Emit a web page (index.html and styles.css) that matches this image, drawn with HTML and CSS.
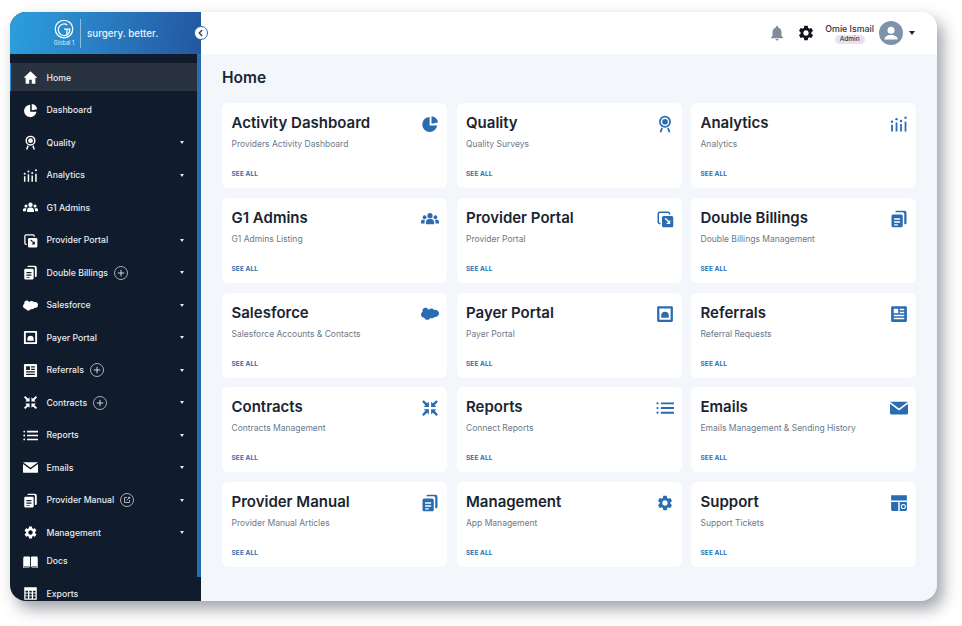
FILE: index.html
```html
<!DOCTYPE html>
<html>
<head>
    <title>Global 1 - Home</title>
    <link rel="stylesheet" href="styles.css">
</head>
<body>
    <svg class="icon-defs" xmlns="http://www.w3.org/2000/svg">
        <symbol id="i-home" viewBox="0 0 24 24"><path d="M12 2 1 12.500h3.200V22H10v-6.500h4V22h5.800v-9.500H23z"/></symbol>
        <symbol id="i-pie" viewBox="0 0 24 24"><path d="M11.500 2.600A10 10 0 1 0 21.600 14H11.500z"/><path d="M14 1.500c4.700.4 8.300 3.900 8.500 8.500L14 11.500z"/></symbol>
        <symbol id="i-award" viewBox="0 0 24 24"><path fill-rule="evenodd" d="M12 1a8 8 0 1 0 0 16 8 8 0 0 0 0-16zm0 2.300a5.700 5.700 0 1 1 0 11.400 5.700 5.700 0 0 1 0-11.400z"/><circle cx="12" cy="9" r="3.800"/><path d="M7 16.500 4.800 23h2.500l1.800-5zM17 16.500l2.200 6.500h-2.500l-1.800-5z"/></symbol>
        <symbol id="i-chart" viewBox="0 0 24 24"><path d="M1.500 13h2.400v9H1.500zM7.500 10h2.400v12H7.500zM13.500 12h2.400v10h-2.400zM19.500 9h2.400v13h-2.400z"/><circle cx="2.700" cy="9" r="1.600"/><circle cx="8.700" cy="5.500" r="1.600"/><circle cx="14.700" cy="8" r="1.600"/><circle cx="20.700" cy="3.500" r="1.600"/></symbol>
        <symbol id="i-users" viewBox="0 0 24 24"><circle cx="12" cy="7.500" r="3.500"/><circle cx="4.800" cy="9.500" r="2.500"/><circle cx="19.200" cy="9.500" r="2.500"/><path d="M6.500 19v-2.500c0-2.500 2-4.500 4-4.500h3c2 0 4 2 4 4.500V19z"/><path d="M0 18v-2.500C0 13.500 1.500 13 3 13h2.500a6 6 0 0 0-.8 3v2zM24 18v-2.500c0-2-1.500-2.500-3-2.500h-2.500a6 6 0 0 1 .8 3v2z"/></symbol>
        <symbol id="i-portal" viewBox="0 0 24 24"><path d="M5 2h11a3 3 0 0 1 3 3v1h-2V5a1 1 0 0 0-1-1H5a1 1 0 0 0-1 1v11a1 1 0 0 0 1 1h1v2H5a3 3 0 0 1-3-3V5a3 3 0 0 1 3-3z"/><path fill-rule="evenodd" d="M10 8h11a2 2 0 0 1 2 2v11a2 2 0 0 1-2 2H10a2 2 0 0 1-2-2V10a2 2 0 0 1 2-2zm1.500 3.500 4.500 4.500-2.500 2.500H19V13l-1.700 1.700-4.500-4.500z"/></symbol>
        <symbol id="i-docs" viewBox="0 0 24 24"><path fill-rule="evenodd" d="M4 6h11a2 2 0 0 1 2 2v13a2 2 0 0 1-2 2H4a2 2 0 0 1-2-2V8a2 2 0 0 1 2-2zm1.500 5v2h8v-2zm0 4v2h8v-2zm0 4v1.500h5V19z"/><path d="M7 3a2 2 0 0 1 2-2h10a3 3 0 0 1 3 3v13a2 2 0 0 1-2 2h-1V5a2 2 0 0 0-2-2z"/></symbol>
        <symbol id="i-cloud" viewBox="0 0 24 24"><path d="M10 6.500c1-1.200 2.300-1.800 3.700-1.800 1.700 0 3.200.9 4 2.200.7-.3 1.400-.5 2.200-.4 2.400.2 4.100 2.300 4.100 4.600 0 2.700-2.200 4.900-4.900 4.900-.4 0-.8 0-1.100-.1-.8 1.200-2.100 1.900-3.600 1.900-.7 0-1.300-.1-1.900-.4-.8 1.500-2.300 2.400-4 2.400-1.900 0-3.500-1.100-4.200-2.800-2.400 0-4.300-1.800-4.300-4.200 0-1.600.9-3 2.200-3.700-.1-.5-.2-1-.2-1.400 0-2.200 1.800-3.900 4-3.900 1.600 0 3 .9 4 2.500z"/></symbol>
        <symbol id="i-payer" viewBox="0 0 24 24"><path fill-rule="evenodd" d="M3 1.500h18A1.500 1.500 0 0 1 22.500 3v18a1.500 1.500 0 0 1-1.500 1.500H3A1.500 1.500 0 0 1 1.500 21V3A1.500 1.500 0 0 1 3 1.500zM4.500 4.500v15h15v-15z"/><path d="M7 17v-3a5 5 0 0 1 10 0v3z"/></symbol>
        <symbol id="i-news" viewBox="0 0 24 24"><path fill-rule="evenodd" d="M3 1.500h18A1.500 1.500 0 0 1 22.500 3v18a1.500 1.500 0 0 1-1.500 1.500H3A1.500 1.500 0 0 1 1.500 21V3A1.500 1.500 0 0 1 3 1.500zM5 5v6h6V5zm8 0v2h6V5zm0 4v2h6V9zM5 13v2h14v-2zm0 4v2h14v-2z"/></symbol>
        <symbol id="i-contract" viewBox="0 0 24 24"><path d="M10.500 10.500v-7L8.200 5.800 3.500 1.500l-2 2 4.300 4.700-2.300 2.300zM13.500 10.500v-7l2.300 2.300 4.700-4.300 2 2-4.300 4.700 2.300 2.300zM10.500 13.500v7l-2.300-2.300-4.700 4.300-2-2 4.300-4.700-2.300-2.300zM13.500 13.500v7l2.300-2.300 4.700 4.300 2-2-4.300-4.700 2.300-2.300z"/></symbol>
        <symbol id="i-list" viewBox="0 0 24 24"><path d="M6.500 4.500H24V7H6.500zM6.500 10.700H24v2.500H6.500zM6.500 17H24v2.500H6.500z"/><circle cx="2" cy="5.700" r="1.500"/><circle cx="2" cy="12" r="1.500"/><circle cx="2" cy="18.200" r="1.500"/></symbol>
        <symbol id="i-mail" viewBox="0 0 24 24"><path d="M0 3.500h24L12 12.500z"/><path d="M0 6.200V19a1.500 1.500 0 0 0 1.500 1.500h21A1.500 1.500 0 0 0 24 19V6.200l-12 9z"/></symbol>
        <symbol id="i-gear" viewBox="0 0 24 24"><path d="M19.140 12.940c.04-.3.06-.61.06-.94 0-.32-.02-.64-.07-.94l2.030-1.580a.49.49 0 0 0 .12-.61l-1.920-3.320a.488.488 0 0 0-.59-.22l-2.390.96c-.5-.38-1.030-.7-1.620-.94l-.36-2.540a.484.484 0 0 0-.48-.41h-3.840c-.24 0-.43.17-.47.41l-.36 2.540c-.59.24-1.130.57-1.620.94l-2.390-.96c-.22-.08-.47 0-.59.22L2.740 8.870c-.12.21-.08.47.12.61l2.030 1.580c-.05.3-.09.63-.09.94s.02.64.07.94l-2.030 1.580a.49.49 0 0 0-.12.61l1.920 3.320c.12.22.37.29.59.22l2.390-.96c.5.38 1.030.7 1.620.94l.36 2.540c.05.24.24.41.48.41h3.840c.24 0 .44-.17.47-.41l.36-2.540c.59-.24 1.130-.56 1.620-.94l2.390.96c.22.08.47 0 .59-.22l1.920-3.320c.12-.22.07-.47-.12-.61l-2.010-1.580zM12 15.600c-1.980 0-3.600-1.620-3.600-3.600s1.620-3.600 3.600-3.600 3.600 1.620 3.600 3.600-1.620 3.600-3.600 3.600z"/></symbol>
        <symbol id="i-book" viewBox="0 0 24 24"><path d="M1 4h9a2 2 0 0 1 1.300.6V21a3 3 0 0 0-2-1H1zm22 0h-9a2 2 0 0 0-1.300.6V21a3 3 0 0 1 2-1h8.300z"/><path d="M0 6h1v15h9v1H0zM24 6h-1v15h-9v1h10z"/></symbol>
        <symbol id="i-table" viewBox="0 0 24 24"><path fill-rule="evenodd" d="M2 2h20v20H2zm2 5.500v3h4v-3zm6 0v3h4v-3zm6 0v3h4v-3zM4 12v3h4v-3zm6 0v3h4v-3zm6 0v3h4v-3zM4 16.500V20h4v-3.500zm6 0V20h4v-3.500zm6 0V20h4v-3.500z"/></symbol>
        <symbol id="i-support" viewBox="0 0 24 24"><path d="M1.500 1.500h21v7h-21zM1.500 10.500h9.500v12H3a1.500 1.500 0 0 1-1.500-1.500z"/><path fill-rule="evenodd" d="M13 10.500h9.500V21a1.500 1.500 0 0 1-1.500 1.500h-8zm4.800 2.800a3.400 3.400 0 1 0 0 6.800 3.400 3.400 0 0 0 0-6.800z"/><circle cx="17.800" cy="16.700" r="2"/></symbol>
        <symbol id="i-plus" viewBox="0 0 14 14"><circle cx="7" cy="7" r="6.500" fill="none" stroke="currentColor" stroke-width=".7"/><path d="M7 3.800v6.400M3.800 7h6.400" fill="none" stroke="currentColor" stroke-width=".9"/></symbol>
        <symbol id="i-ext" viewBox="0 0 14 14"><circle cx="7" cy="7" r="6.500" fill="none" stroke="currentColor" stroke-width=".7"/><path d="M7 4.500H4.500v5h5V7M6.500 7.500 9.500 4.500M8 4.300h1.700V6" fill="none" stroke="currentColor" stroke-width=".7"/></symbol>
    </svg>

    <div class="window">
        <aside class="sidebar">
            <div class="brand">
                <div class="brand-mark">
                    <svg class="brand-logo" viewBox="0 0 24 24" fill="none" stroke="#fff" stroke-width="1.500">
                        <circle cx="12" cy="12" r="10.500"/>
                        <path d="M16 7.200A7 7 0 1 0 19 12h-7"/>
                        <path d="M15.500 12v8"/>
                    </svg>
                    <span class="brand-name">Global 1</span>
                </div>
                <span class="brand-tag">surgery. better.</span>
            </div>
            <div class="sidebar-body">
                <nav class="nav">
                    <a class="nav-row active"><svg class="nav-icon"><use href="#i-home"/></svg><span>Home</span></a>
                    <a class="nav-row"><svg class="nav-icon"><use href="#i-pie"/></svg><span>Dashboard</span></a>
                    <a class="nav-row"><svg class="nav-icon"><use href="#i-award"/></svg><span>Quality</span><i class="caret"></i></a>
                    <a class="nav-row"><svg class="nav-icon"><use href="#i-chart"/></svg><span>Analytics</span><i class="caret"></i></a>
                    <a class="nav-row"><svg class="nav-icon"><use href="#i-users"/></svg><span>G1 Admins</span></a>
                    <a class="nav-row"><svg class="nav-icon"><use href="#i-portal"/></svg><span>Provider Portal</span><i class="caret"></i></a>
                    <a class="nav-row"><svg class="nav-icon"><use href="#i-docs"/></svg><span>Double Billings</span><svg class="nav-add"><use href="#i-plus"/></svg><i class="caret"></i></a>
                    <a class="nav-row"><svg class="nav-icon"><use href="#i-cloud"/></svg><span>Salesforce</span><i class="caret"></i></a>
                    <a class="nav-row"><svg class="nav-icon"><use href="#i-payer"/></svg><span>Payer Portal</span><i class="caret"></i></a>
                    <a class="nav-row"><svg class="nav-icon"><use href="#i-news"/></svg><span>Referrals</span><svg class="nav-add"><use href="#i-plus"/></svg><i class="caret"></i></a>
                    <a class="nav-row"><svg class="nav-icon"><use href="#i-contract"/></svg><span>Contracts</span><svg class="nav-add"><use href="#i-plus"/></svg><i class="caret"></i></a>
                    <a class="nav-row"><svg class="nav-icon"><use href="#i-list"/></svg><span>Reports</span><i class="caret"></i></a>
                    <a class="nav-row"><svg class="nav-icon"><use href="#i-mail"/></svg><span>Emails</span><i class="caret"></i></a>
                    <a class="nav-row"><svg class="nav-icon"><use href="#i-docs"/></svg><span>Provider Manual</span><svg class="nav-add"><use href="#i-ext"/></svg><i class="caret"></i></a>
                    <a class="nav-row tight"><svg class="nav-icon"><use href="#i-gear"/></svg><span>Management</span><i class="caret"></i></a>
                    <a class="nav-row"><svg class="nav-icon"><use href="#i-book"/></svg><span>Docs</span></a>
                    <a class="nav-row"><svg class="nav-icon"><use href="#i-table"/></svg><span>Exports</span></a>
                </nav>
                <div class="rail"></div>
            </div>
            <button class="collapse"><svg viewBox="0 0 10 10"><path d="M6 2.500 3.500 5 6 7.500"/></svg></button>
        </aside>

        <div class="content">
            <header class="topbar">
                <svg class="top-icon bell" viewBox="0 0 24 24"><path d="M12 22c1.100 0 2-.9 2-2h-4c0 1.100.89 2 2 2zm6-6v-5c0-3.070-1.640-5.640-4.500-6.320V4c0-.83-.67-1.500-1.500-1.500s-1.500.67-1.500 1.500v.68C7.630 5.360 6 7.920 6 11v5l-2 2v1h16v-1l-2-2z"/></svg>
                <svg class="top-icon"><use href="#i-gear"/></svg>
                <div class="user">
                    <span class="user-name">Omie Ismail</span>
                    <span class="user-role">Admin</span>
                </div>
                <svg class="avatar" viewBox="0 0 24 24"><circle cx="12" cy="12" r="12" fill="#7d93ab"/><circle cx="12" cy="9.300" r="3.500" fill="#fff"/><path d="M5.500 18.500c0-3 2.500-4.500 6.500-4.500s6.500 1.500 6.500 4.500z" fill="#fff"/></svg>
                <i class="caret dark"></i>
            </header>

            <main class="main">
                <h1>Home</h1>
                <div class="cards">
                    <div class="card"><div class="card-head"><h2>Activity Dashboard</h2><svg class="card-icon"><use href="#i-pie"/></svg></div><p>Providers Activity Dashboard</p><a>SEE ALL</a></div>
                    <div class="card"><div class="card-head"><h2>Quality</h2><svg class="card-icon"><use href="#i-award"/></svg></div><p>Quality Surveys</p><a>SEE ALL</a></div>
                    <div class="card"><div class="card-head"><h2>Analytics</h2><svg class="card-icon"><use href="#i-chart"/></svg></div><p>Analytics</p><a>SEE ALL</a></div>
                    <div class="card"><div class="card-head"><h2>G1 Admins</h2><svg class="card-icon"><use href="#i-users"/></svg></div><p>G1 Admins Listing</p><a>SEE ALL</a></div>
                    <div class="card"><div class="card-head"><h2>Provider Portal</h2><svg class="card-icon"><use href="#i-portal"/></svg></div><p>Provider Portal</p><a>SEE ALL</a></div>
                    <div class="card"><div class="card-head"><h2>Double Billings</h2><svg class="card-icon"><use href="#i-docs"/></svg></div><p>Double Billings Management</p><a>SEE ALL</a></div>
                    <div class="card"><div class="card-head"><h2>Salesforce</h2><svg class="card-icon"><use href="#i-cloud"/></svg></div><p>Salesforce Accounts &amp; Contacts</p><a>SEE ALL</a></div>
                    <div class="card"><div class="card-head"><h2>Payer Portal</h2><svg class="card-icon"><use href="#i-payer"/></svg></div><p>Payer Portal</p><a>SEE ALL</a></div>
                    <div class="card"><div class="card-head"><h2>Referrals</h2><svg class="card-icon"><use href="#i-news"/></svg></div><p>Referral Requests</p><a>SEE ALL</a></div>
                    <div class="card"><div class="card-head"><h2>Contracts</h2><svg class="card-icon"><use href="#i-contract"/></svg></div><p>Contracts Management</p><a>SEE ALL</a></div>
                    <div class="card"><div class="card-head"><h2>Reports</h2><svg class="card-icon"><use href="#i-list"/></svg></div><p>Connect Reports</p><a>SEE ALL</a></div>
                    <div class="card"><div class="card-head"><h2>Emails</h2><svg class="card-icon"><use href="#i-mail"/></svg></div><p>Emails Management &amp; Sending History</p><a>SEE ALL</a></div>
                    <div class="card"><div class="card-head"><h2>Provider Manual</h2><svg class="card-icon"><use href="#i-docs"/></svg></div><p>Provider Manual Articles</p><a>SEE ALL</a></div>
                    <div class="card"><div class="card-head"><h2>Management</h2><svg class="card-icon"><use href="#i-gear"/></svg></div><p>App Management</p><a>SEE ALL</a></div>
                    <div class="card"><div class="card-head"><h2>Support</h2><svg class="card-icon"><use href="#i-support"/></svg></div><p>Support Tickets</p><a>SEE ALL</a></div>
                </div>
            </main>
        </div>
    </div>
</body>
</html>
```

FILE: styles.css
```css
* { box-sizing: border-box; }
html, body { height: 100%; }
body { margin: 0; padding: 12px 25px 25px 10px; background: #fff; font-family: Inter, "Noto Sans", sans-serif; overflow: hidden; }
.icon-defs { display: none; }

.window { display: flex; height: 589px; border-radius: 16px; background: #f3f6fb; box-shadow: 6px 8px 16px rgba(40, 50, 65, 0.45); overflow: hidden; position: relative; }

/* sidebar */
.sidebar { width: 191px; flex: none; display: flex; flex-direction: column; background: #101c2c; }
.brand { height: 42px; flex: none; display: flex; align-items: center; padding-left: 41px; background: linear-gradient(100deg, #2ba0dd 0%, #2a7fc4 45%, #2356a0 100%); }
.brand-mark { display: flex; flex-direction: column; align-items: center; width: 26px; }
.brand-logo { width: 20px; height: 20px; }
.brand-name { font-size: 5.5px; line-height: 7px; color: #dff0fb; margin-top: 1px; white-space: nowrap; }
.brand-tag { margin-left: 3px; padding: 9px 0 9px 6px; border-left: 1px solid rgba(255, 255, 255, 0.45); font-size: 9.8px; line-height: 11px; font-weight: 500; color: #e8f4fc; white-space: nowrap; }
.sidebar-body { flex: 1; display: flex; min-height: 0; }
.nav { flex: 1; min-width: 0; padding-top: 9px; overflow: hidden; }
.rail { width: 4px; height: 523px; flex: none; background: #2a6cb0; }
.nav-row { display: flex; align-items: center; height: 28px; margin-bottom: 4.5px; padding: 1px 13px 0 12px; border-left: 1px solid transparent; font-size: 8.7px; font-weight: 500; color: #e6ebf0; white-space: nowrap; }
.nav-row.tight { margin-bottom: 0.5px; }
.nav-row.active { background: #29333f; border-left-color: #2a8fd0; }
.nav-icon { width: 15px; height: 15px; margin-right: 8.5px; flex: none; fill: #fff; }
.nav-add { width: 14px; height: 14px; margin-left: 6px; flex: none; color: #e6ebf0; }
.caret { width: 0; height: 0; margin-left: auto; border-left: 2.5px solid transparent; border-right: 2.5px solid transparent; border-top: 3px solid #e6ebf0; }
.caret.dark { margin-left: 6px; border-left-width: 3px; border-right-width: 3px; border-top: 4px solid #1d2733; }
.collapse { position: absolute; left: 184px; top: 14px; width: 14px; height: 14px; padding: 0; border: 1px solid #2a6cb0; border-radius: 50%; background: #fff; display: flex; }
.collapse svg { width: 12px; height: 12px; fill: none; stroke: #33465c; stroke-width: 1.2; }

/* top bar */
.content { flex: 1; min-width: 0; display: flex; flex-direction: column; }
.topbar { height: 42px; flex: none; display: flex; align-items: center; justify-content: flex-end; padding-right: 22px; background: #fff; }
.top-icon { width: 18px; height: 18px; margin-right: 11px; fill: #10151c; }
.top-icon.bell { fill: #7f8c99; }
.top-icon + .user { margin-left: -1px; }
.user { display: flex; flex-direction: column; align-items: center; }
.user-name { font-size: 8.8px; font-weight: 500; color: #2a3442; line-height: 11px; }
.user-role { margin-top: 1px; padding: 0 5px; border-radius: 5px; background: #e4e1f8; font-size: 6.5px; font-weight: 500; color: #2a3442; line-height: 9px; }
.avatar { width: 24px; height: 24px; margin-left: 5px; }

/* cards */
.main { flex: 1; padding: 15px 21px 0; }
h1 { margin: 0 0 16px; font-size: 15.5px; line-height: 18px; font-weight: 600; color: #1b2532; }
.cards { display: grid; grid-template-columns: repeat(3, 1fr); grid-auto-rows: 85px; gap: 9.75px 9.5px; }
.card { display: flex; flex-direction: column; padding: 10px 8px 9px 9.5px; border-radius: 6px; background: #fff; }
.card-head { display: flex; justify-content: space-between; align-items: flex-start; }
.card h2 { margin: 0; font-size: 15px; line-height: 20px; font-weight: 600; color: #1a2430; }
.card-icon { width: 18px; height: 18px; margin-top: 2px; flex: none; fill: #2a6cb0; }
.card p { margin: 5px 0 0; font-size: 8.5px; line-height: 12px; color: #6b7a8c; }
.card a { margin-top: auto; font-size: 6.5px; line-height: 9px; font-weight: 700; letter-spacing: 0.1px; color: #2b6fb5; }
```
